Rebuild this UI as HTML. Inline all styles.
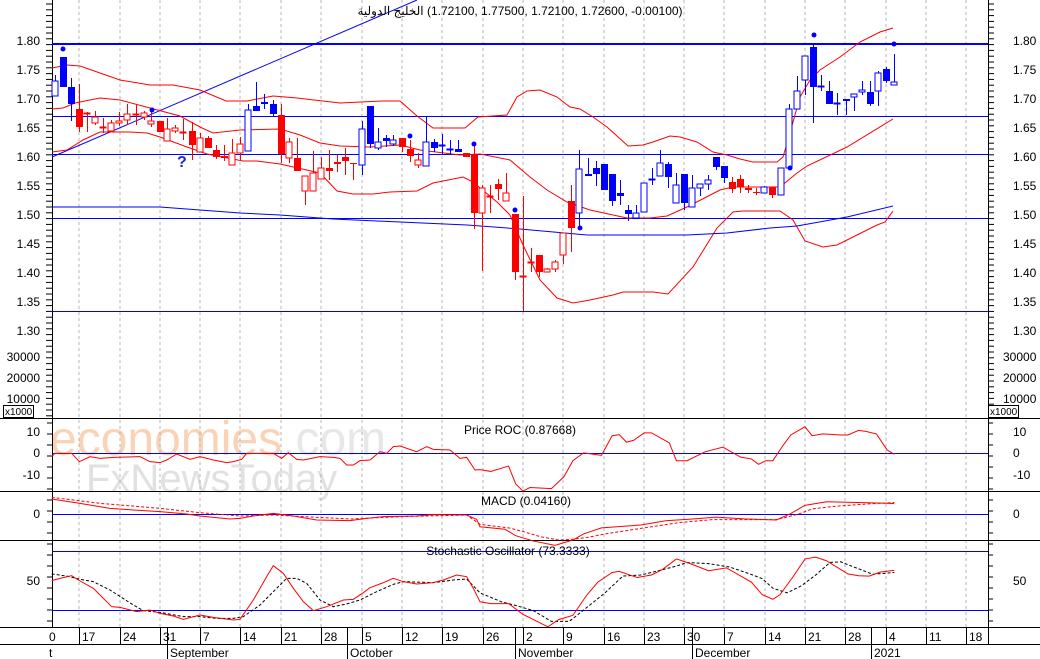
<!DOCTYPE html>
<html><head><meta charset="utf-8"><style>
html,body{margin:0;padding:0;background:#fff;overflow:hidden}
svg{display:block;font-family:"Liberation Sans","Noto Sans CJK SC",sans-serif;font-size:12px}
</style></head><body>
<svg id="s" width="1040" height="659" xmlns="http://www.w3.org/2000/svg">
<text x="50" y="455" font-size="48" fill="#f9c9a6" opacity="0.8">economies<tspan fill="#e2e2e2">.com</tspan></text>
<text x="86" y="492" font-size="40" fill="#dcdcdc" opacity="0.85">FxNewsToday</text>
<g id="g"></g>
<text x="520" y="15" text-anchor="middle" fill="#000">&#x200E;الخليج الدولية&#x200E; (1.72100, 1.77500, 1.72100, 1.72600, -0.00100)&#x200E;</text>
<text x="520" y="434" text-anchor="middle">Price ROC (0.87668)</text>
<text x="526" y="505" text-anchor="middle">MACD (0.04160)</text>
<text x="508" y="555" text-anchor="middle">Stochastic Oscillator (73.3333)</text>
<text x="177" y="167" font-size="16" font-weight="bold" fill="#2222dd">?</text>
</svg>
<script>
const g=document.getElementById('g');let h='';
const L=(x1,y1,x2,y2,c,w,d)=>{h+=`<line x1="${x1}" y1="${y1}" x2="${x2}" y2="${y2}" stroke="${c}" stroke-width="${w||1}" ${d?'stroke-dasharray="'+d+'"':''}/>`};
const P=(pts,c,d,w)=>{h+=`<polyline fill="none" stroke="${c}" stroke-width="${w||1}" ${d?'stroke-dasharray="'+d+'"':''} points="${pts.map(p=>p.join(',')).join(' ')}"/>`};
const T=(x,y,t,a)=>{h+=`<text x="${x}" y="${y}" ${a?'text-anchor="'+a+'"':''}>${t}</text>`};
const z2=a=>a.map(p=>[p[0]/3,400+p[1]/3]);
const z4=a=>a.map(p=>[480+p[0]/2.8,400+p[1]/2.8]);
const J=(a,b)=>{const bx=b[0][0];return a.filter(p=>p[0]<bx).concat(b);};
const weeks=[79,120,160,200,240,281,321,362,402,442,483,523,563,604,644,684,724,765,805,845,886,926,966];
weeks.forEach(x=>L(x,0,x,627,'#b4b4b4',1,'3,3'));
[418,491,540,627,644].forEach(y=>L(0,y+.5,1040,y+.5,'#000'));
L(52.5,0,52.5,627,'#000');L(988.5,0,988.5,627,'#000');
for(let y=4;y<418;y+=5.8){L(46,y,52,y,'#000');L(988,y,994,y,'#000');}
for(let y=423;y<627;y+=11){L(47,y,52,y,'#000');L(988,y,993,y,'#000');}
const pl=['1.80','1.75','1.70','1.65','1.60','1.55','1.50','1.45','1.40','1.35','1.30'];
pl.forEach((t,i)=>{const y=41+i*29+4;T(40,y,t,'end');T(1013,y,t);});
[['30000',357],['20000',378],['10000',399]].forEach(a=>{T(40,a[1]+4,a[0],'end');T(1003,a[1]+4,a[0]);});
h+='<rect x="3.5" y="405.5" width="30" height="12" fill="#fff" stroke="#000"/><text x="5" y="415" font-size="10">x1000</text>';
h+='<rect x="988.5" y="405.5" width="30" height="12" fill="#fff" stroke="#000"/><text x="990" y="415" font-size="10">x1000</text>';
[['10',432],['0',453],['-10',475]].forEach(a=>{T(40,a[1]+4,a[0],'end');T(1013,a[1]+4,a[0]);});
T(40,518,'0','end');T(1013,518,'0');T(40,585,'50','end');T(1013,585,'50');
L(52,44,988,44,'#0000ff',2);[116,154,218,311].forEach(y=>L(52,y+.5,988,y+.5,'#0000ff'));
L(52,453.5,988,453.5,'#0000ff');L(52,514.5,988,514.5,'#0000ff');L(52,551.5,988,551.5,'#0000ff');L(52,610.5,988,610.5,'#0000ff');
L(52,157,417,0,'#0000ff');
P([[52,68],[67,65],[80,66],[120,80],[150,85],[173,85],[200,90],[226,101],[247,101],[273,96],[297,98],[340,103],[383,101],[400,101],[417,116],[433,128],[465,128],[478,117],[507,115],[517,97],[527,91],[540,90],[557,97],[570,107],[580,109],[593,117],[607,127],[628,146],[643,145],[653,142],[670,136],[680,137],[697,142],[713,152],[727,155],[740,159],[753,162],[777,162],[783,157],[788,140],[800,97],[810,80],[820,70],[840,57],[860,42],[880,32],[893,28]],'#f00');
P([[52,109],[63,108],[75,103],[100,98],[120,100],[150,108],[180,116],[200,127],[213,133],[240,130],[280,129],[300,135],[320,143],[340,146],[370,147],[400,145],[420,150],[460,155],[480,154],[510,160],[530,177],[547,190],[567,202],[590,210],[627,218],[650,218],[667,216],[687,207],[720,190],[733,187],[780,187],[797,173],[807,166],[847,147],[893,119]],'#f00');
P([[52,152],[67,150],[83,140],[100,132],[130,132],[147,133],[160,137],[187,147],[207,154],[243,161],[257,161],[280,164],[320,173],[337,191],[353,194],[373,194],[390,192],[417,191],[433,183],[463,177],[473,182],[497,202],[510,215],[523,245],[540,280],[557,298],[573,303],[590,300],[613,295],[623,292],[653,292],[668,294],[693,267],[717,228],[733,212],[743,211],[780,211],[793,220],[805,241],[823,247],[837,245],[857,235],[877,225],[885,222],[893,211]],'#f00');
P([[52,207],[160,207],[200,210],[240,213],[280,215],[333,219],[400,222],[467,225],[520,229],[587,235],[687,235],[727,233],[770,228],[797,226],[847,217],[893,206]],'#0000ff');
const C=[[55,81,96,75,96,'b',0],[63,57,87,57,87,'b',1],[71,87,104,78,121,'b',1],[79,109,127,84,132,'r',1],[87,113,114,112,132,'r',0],[95,117,123,111,125,'r',0],[103,127,128,118,133,'r',0],[111,123,131,120,131,'r',0],[119,121,123,112,126,'r',0],[127,114,120,104,125,'r',0],[136,114,115,104,125,'r',0],[144,113,117,111,120,'r',0],[151,121,124,110,127,'r',0],[160,121,132,121,132,'r',1],[167,129,141,118,141,'r',0],[175,128,131,125,133,'r',0],[183,132,133,119,140,'r',0],[192,131,145,122,160,'r',1],[200,138,152,133,152,'r',0],[208,138,148,136,148,'r',1],[216,150,157,145,159,'r',1],[224,156,158,145,161,'r',1],[232,153,165,139,165,'r',0],[240,144,153,137,160,'r',0],[248,110,151,104,151,'b',0],[256,106,111,82,111,'b',1],[264,102,104,94,109,'b',1],[273,104,114,100,117,'b',1],[281,115,154,104,163,'r',1],[289,142,158,138,163,'r',0],[297,158,171,138,171,'r',1],[305,176,191,176,205,'r',0],[313,173,191,151,191,'r',0],[321,168,179,157,179,'r',0],[329,168,171,150,180,'r',1],[337,162,164,155,172,'r',1],[345,157,161,148,175,'r',1],[353,163,164,163,180,'r',1],[362,129,165,121,175,'b',0],[370,106,144,106,148,'b',1],[378,142,148,128,150,'b',0],[386,138,141,135,147,'b',1],[393,140,144,135,146,'b',0],[402,138,147,138,152,'r',1],[410,149,156,140,162,'r',1],[418,160,165,153,168,'r',0],[426,142,166,117,166,'b',0],[434,142,148,139,152,'b',1],[442,145,146,134,155,'b',0],[450,149,150,140,154,'b',0],[458,149,152,140,152,'b',1],[466,153,157,153,157,'r',1],[474,155,213,146,229,'r',1],[482,188,213,185,271,'r',0],[490,196,197,185,213,'r',0],[498,184,189,179,200,'r',1],[506,193,201,173,201,'r',0],[515,214,272,214,280,'r',1],[523,276,277,196,311,'r',0],[531,262,263,248,272,'r',0],[539,255,272,255,277,'r',1],[547,269,272,268,272,'r',0],[555,262,269,260,272,'r',0],[563,233,255,233,264,'r',0],[571,201,228,185,252,'r',1],[579,169,213,150,230,'b',0],[588,174,176,158,176,'b',1],[596,168,174,161,186,'b',1],[604,164,190,164,190,'b',1],[612,174,201,174,206,'b',1],[620,193,196,180,205,'b',1],[628,210,214,205,221,'b',1],[636,213,218,205,218,'b',0],[644,183,212,183,212,'b',0],[652,179,180,168,185,'b',0],[660,163,176,150,176,'b',0],[668,164,177,162,188,'b',1],[676,185,203,173,203,'b',0],[684,174,203,174,210,'b',1],[692,188,207,175,207,'b',0],[700,184,188,184,196,'b',0],[708,180,184,175,190,'b',0],[716,157,167,157,170,'b',1],[724,166,178,166,183,'b',1],[732,182,189,177,193,'r',1],[740,179,187,175,193,'r',1],[748,188,190,185,193,'r',1],[756,192,193,188,195,'r',1],[764,187,193,186,193,'b',0],[772,187,195,187,198,'r',1],[781,168,195,168,195,'b',0],[789,109,168,104,168,'b',0],[797,91,109,76,109,'b',0],[805,56,80,56,95,'b',0],[813,47,87,44,123,'b',1],[821,86,87,75,91,'b',0],[829,91,104,81,104,'b',1],[837,103,104,93,115,'b',0],[846,99,101,99,115,'b',1],[854,94,97,94,111,'b',0],[862,90,92,81,95,'b',0],[870,92,104,81,106,'b',1],[878,73,91,71,106,'b',0],[886,69,81,67,83,'b',1],[894,82,85,54,85,'b',0]];
C.forEach(c=>{const col=c[5]=='b'?'#0000ff':'#ff0000';L(c[0]+.5,c[3],c[0]+.5,c[4],col);
 const hgt=Math.max(c[2]-c[1],1);
 h+=`<rect x="${c[0]-3}" y="${c[1]}" width="${c[6]?7:6}" height="${hgt}" fill="${c[6]?col:'#fff'}" stroke="${c[6]?'none':col}"/>`;});
[[63,49],[152,110],[410,136],[474,144],[515,210],[580,228],[790,168],[814,35],[894,44]].forEach(d=>h+=`<circle cx="${d[0]}" cy="${d[1]}" r="2.5" fill="#0000ff"/>`);
P(J(z2([[155,170],[165,160],[215,160],[238,185],[270,170],[300,175],[340,172],[420,170],[450,185],[480,188],[500,180],[530,162],[570,178],[600,170],[640,180],[680,188],[700,185],[725,178],[740,160],[820,160],[845,175],[865,158],[890,178],[910,180],[960,170],[1000,172],[1020,175],[1040,195],[1060,195],[1080,182],[1110,180],[1140,155],[1160,160],[1180,140],[1200,138],[1250,155],[1280,140],[1300,148],[1350,150],[1380,175],[1400,172],[1425,210],[1440,200],[1470,198]]),z4([[0,195],[30,200],[80,185],[100,235],[120,255],[140,245],[200,248],[235,215],[260,170],[290,148],[340,155],[370,100],[390,97],[410,118],[430,113],[460,92],[480,92],[530,120],[550,170],[580,170],[630,145],[680,132],[730,160],[760,165],[780,180],[800,170],[820,170],[850,125],[870,98],[910,75],[930,100],[960,95],[1010,98],[1030,98],[1060,85],[1080,88],[1110,95],[1140,140],[1160,152]])),'#f00');
P(J(z2([[155,297],[240,310],[330,325],[400,330],[480,335],[560,342],[600,348],[690,357],[720,355],[760,348],[820,340],[880,348],[950,360],[1050,362],[1100,355],[1150,350],[1250,348],[1300,344],[1400,345],[1430,358]]),z4([[0,355],[70,362],[100,380],[150,395],[210,407],[260,392],[290,375],[340,358],[450,350],[520,338],[600,333],[660,328],[740,333],[830,336],[870,318],[910,295],[970,285],[1100,288],[1160,290]])),'#f00');
P(J(z2([[155,292],[300,310],[480,325],[600,338],[720,348],[820,345],[950,352],[1050,357],[1200,350],[1400,345],[1440,350]]),z4([[0,348],[80,358],[120,368],[170,383],[220,392],[260,390],[300,385],[350,375],[460,358],[560,343],[650,335],[760,335],[830,335],[890,320],[930,305],[990,298],[1100,290],[1160,287]])),'#f00','3,2');
P(J(z2([[155,522],[200,528],[240,538],[280,545],[330,570],[400,615],[430,632],[480,637],[550,650],[600,650],[650,655],[700,655],[730,650],[780,615],[820,575],[860,535],[890,535],[920,550],[960,600],[1000,620],[1040,612],[1080,600],[1130,575],[1180,553],[1210,545],[1300,548],[1360,540],[1400,537],[1440,540]]),z4([[0,540],[60,565],[110,578],[150,590],[200,620],[250,620],[300,580],[350,540],[400,493],[450,490],[500,478],[550,465],[580,455],[640,458],[700,468],[750,485],[790,500],[820,527],[860,540],[900,520],[940,490],[980,455],[1010,453],[1040,465],[1100,488],[1160,483]])),'#000','3,2');
P(J(z2([[155,542],[180,535],[215,527],[235,540],[280,565],[300,585],[335,620],[360,622],[410,635],[450,630],[480,640],[520,648],[550,658],[600,645],[640,652],[700,660],[720,658],[760,600],[800,530],[820,497],[850,520],[880,565],[910,605],[940,632],[980,620],[1030,600],[1060,598],[1090,578],[1110,563],[1150,548],[1180,535],[1210,545],[1250,552],[1300,548],[1330,540],[1370,525],[1400,530],[1420,565],[1440,568]]),z4([[0,565],[30,570],[80,570],[120,600],[160,620],[190,635],[220,615],[260,603],[300,545],[330,510],[370,483],[390,480],[440,497],[480,490],[510,475],[550,445],[580,455],[640,478],[690,470],[760,510],[790,545],[820,558],[840,545],[880,490],[910,445],[940,440],[970,450],[1030,487],[1060,492],[1090,493],[1120,482],[1160,477]])),'#f00');
const dl=['17','24','31','7','14','21','28','5','12','19','26','2','9','16','23','30','7','14','21','28','4','11','18'];
weeks.forEach((x,i)=>{L(x+.5,627,x+.5,644,'#000');T(x+3,641,dl[i]);});
T(49,641,'0');T(49,657,'t');
[[167,'September'],[347,'October'],[515,'November'],[692,'December'],[871,'2021']].forEach(m=>{L(m[0]+.5,627,m[0]+.5,659,'#000');T(m[0]+3,657,m[1]);});
L(988.5,627,988.5,644,'#000');
g.innerHTML=h;
</script>
</body></html>
